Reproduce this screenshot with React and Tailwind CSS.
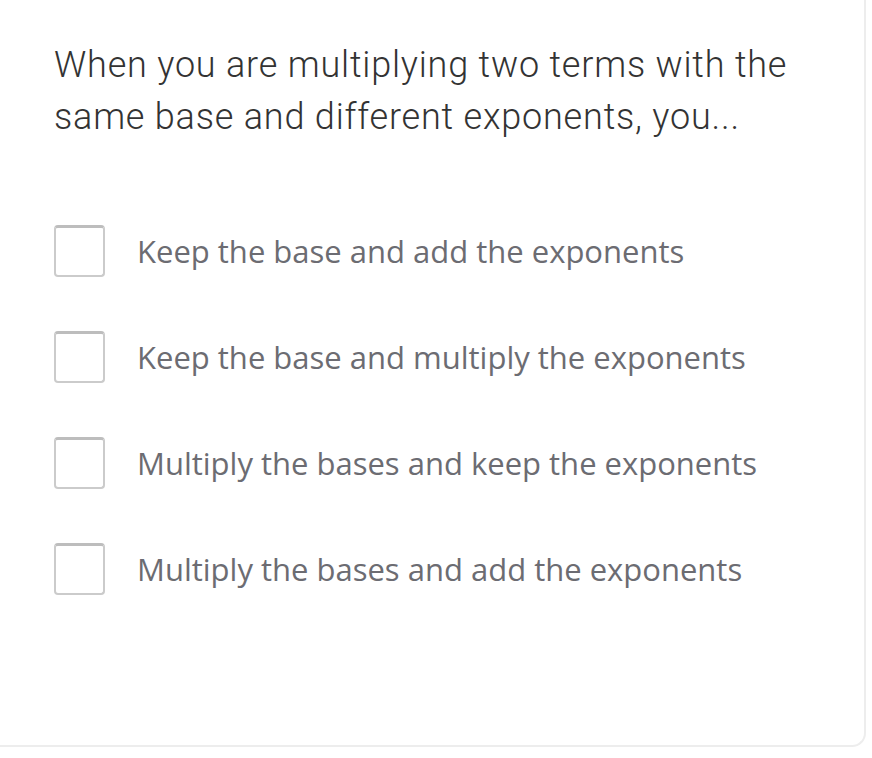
import React, { useState } from "react";

const options = [
  "Keep the base and add the exponents",
  "Keep the base and multiply the exponents",
  "Multiply the bases and keep the exponents",
  "Multiply the bases and add the exponents",
];

const App = () => {
  const [checked, setChecked] = useState({});

  return (
    <div className="w-[872px] h-[758px] bg-white overflow-hidden">
      <div className="w-[866px] h-[747px] bg-white border-r-2 border-b-2 border-[#ededed] rounded-br-[14px] pl-[54px] pt-[39px]">
        <h1
          className="text-[36px] leading-[52px] text-[#333333] font-light tracking-[0.8px]"
          style={{ fontFamily: 'Roboto, "Liberation Sans", sans-serif' }}
        >
          When you are multiplying two terms with the
          <br />
          same base and different exponents, you...
        </h1>
        <div className="mt-[82px] flex flex-col gap-[54px]">
          {options.map((opt, i) => (
            <label key={i} className="flex items-center gap-[32px] cursor-pointer">
              <button
                type="button"
                onClick={() => setChecked((prev) => ({ ...prev, [i]: !prev[i] }))}
                className="w-[51px] h-[52px] rounded-[4px] border-2 border-[#cbcbcb] border-t-[3px] border-t-[#bdbdbd] bg-white shrink-0"
              />
              <span
                className="text-[31px] text-[#6c6c72]"
                style={{ fontFamily: '"Open Sans", "Noto Sans", sans-serif' }}
              >
                {opt}
              </span>
            </label>
          ))}
        </div>
      </div>
    </div>
  );
};

export default App;
